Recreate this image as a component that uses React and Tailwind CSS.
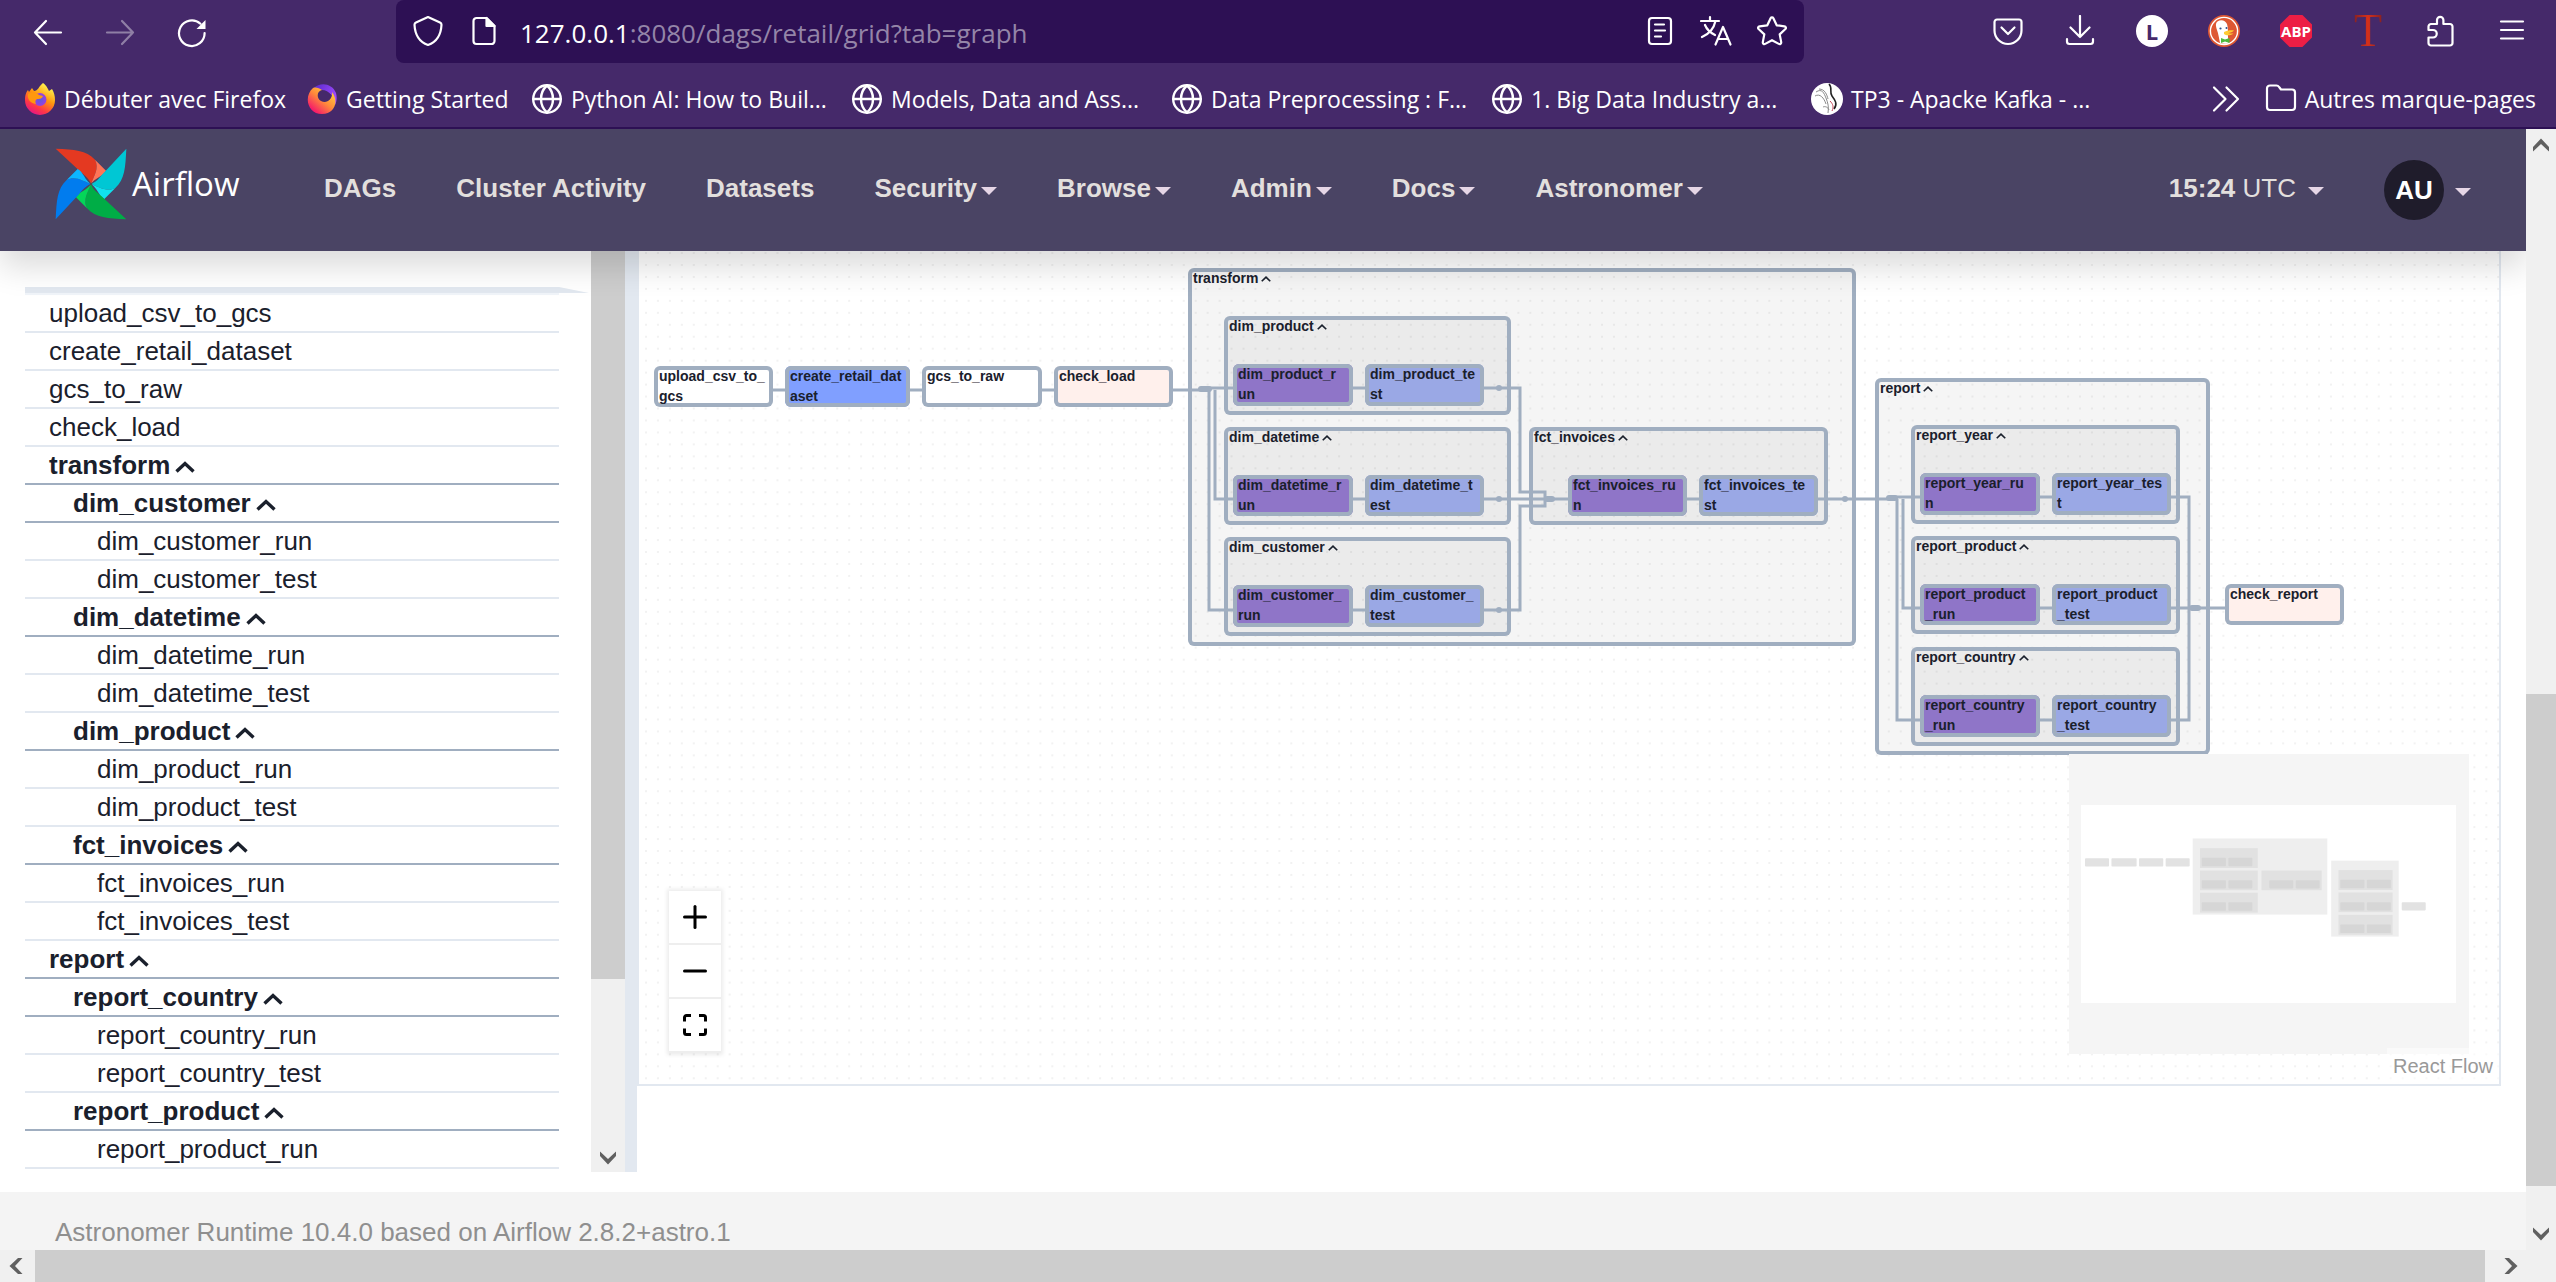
import React from "react";
import { Plus, Minus } from "lucide-react";

/* ---------- Browser chrome icons (32px grid) ---------- */

function Icon({ children, className = "" }) {
  return (
    <svg
      viewBox="0 0 32 32"
      className={"size-8 shrink-0 " + className}
      fill="none"
      stroke="currentColor"
      strokeWidth="2.2"
      strokeLinecap="round"
      strokeLinejoin="round"
      aria-hidden="true"
    >
      {children}
    </svg>
  );
}

const ArrowLeftIcon = () => (
  <Icon>
    <path d="M14 5 3 16.500 14 28M3 16.500H29" />
  </Icon>
);

const ArrowRightIcon = () => (
  <Icon className="opacity-40">
    <path d="M18 5 29 16.500 18 28M29 16.500H3" />
  </Icon>
);

const ReloadIcon = () => (
  <Icon>
    <path d="M28.600 17a12.800 12.800 0 1 1-4.200-9.300" />
    <path d="M29.500 4v9h-9z" fill="currentColor" stroke="none" />
  </Icon>
);

const ShieldIcon = () => (
  <Icon>
    <path d="M16 2 28 7.500c1 .5 1.500 1 1.500 2.200C29 20 24.500 27 16 30 7.500 27 3 20 2.500 9.700c0-1.200.5-1.700 1.500-2.200z" />
  </Icon>
);

const PageIcon = () => (
  <Icon>
    <path d="M18.500 3H8.500A3 3 0 0 0 5.500 6v20a3 3 0 0 0 3 3h15a3 3 0 0 0 3-3V11z" />
    <path d="M18.500 3v8h8z" fill="currentColor" />
  </Icon>
);

const ReaderIcon = () => (
  <Icon>
    <rect x="5" y="3" width="22" height="26" rx="3" />
    <path d="M11 9.500h9M11 15.500h10M11 21.500h6" />
  </Icon>
);

const TranslateIcon = () => (
  <Icon>
    <path d="M1 6h18M10 2v4M15.500 6C14 13 9 19 2 22M5 10c2 5 6 8 10 10" />
    <path d="M15.500 29.500 23 12l7.500 17.500M18 24h10" />
  </Icon>
);

const StarIcon = () => (
  <Icon>
    <path d="M14.600 3.200a1.600 1.600 0 0 1 2.800 0l3.300 7.100 7.700 1c1.500.2 2 1.700 1 2.700l-5.700 5.400 1.500 7.700c.2 1.500-1.100 2.500-2.400 1.800L16 25.200l-6.800 3.700c-1.300.7-2.600-.3-2.400-1.800l1.500-7.700L2.600 14c-1-1-.5-2.500 1-2.700l7.700-1z" />
  </Icon>
);

const PocketIcon = () => (
  <Icon>
    <path d="M5 4.500h22a2.500 2.500 0 0 1 2.500 2.500v8.500c0 7.500-6 13.500-13.500 13.500S2.500 23 2.500 15.500V7A2.500 2.500 0 0 1 5 4.500zM9.500 12.500l6.500 6.500 6.500-6.500" />
  </Icon>
);

const DownloadIcon = () => (
  <Icon>
    <path d="M16 1v21M6.500 12.500 16 22l9.500-9.500M3 24v2.500A2.500 2.500 0 0 0 5.500 29h21a2.500 2.500 0 0 0 2.500-2.500V24" />
  </Icon>
);

const DuckIcon = () => (
  <svg viewBox="0 0 32 32" className="size-8" aria-hidden="true">
    <circle cx="16" cy="16" r="16" fill="#de5833" />
    <circle cx="16" cy="16" r="13.600" fill="none" stroke="#fff" strokeWidth="1.400" />
    <path d="M9.500 6.500c3.500-2.500 8-1 9.500 2.500 1.500 4 .5 9 1 13l.5 6c-3 1.200-6 1-8.500 0C11 23 10.500 19 9 15c-1-3.500-2-6.500.5-8.500z" fill="#fff" />
    <circle cx="12.500" cy="13.500" r="1.100" fill="#2d4f8e" />
    <circle cx="18.500" cy="13" r="1" fill="#2d4f8e" />
    <path d="M16 17c3-1.500 7-2 10-1.500-1 1.500-4 2.300-6 2.500 2 .6 4 .5 5.500.5-2 2-7.500 2.500-9.500.5z" fill="#fc3" />
    <path d="M13 23l4 1.500 4.500-1.500v5L17 26.500 13 28z" fill="#4cba3c" />
  </svg>
);

const AdblockIcon = () => (
  <span className="grid size-8 place-items-center bg-[#ed1e45] text-[15px] font-bold leading-none text-white [clip-path:polygon(30%_0,70%_0,100%_30%,100%_70%,70%_100%,30%_100%,0_70%,0_30%)]">
    ABP
  </span>
);

const PuzzleIcon = () => (
  <Icon>
    <path d="M7 9h6V5a3.200 3.200 0 0 1 6.400 0v4H26a2.500 2.500 0 0 1 2.500 2.500V28a2.500 2.500 0 0 1-2.500 2.500H7A2.500 2.500 0 0 1 4.500 28v-5.500H9a3.700 3.700 0 0 0 0-7.500H4.500v-3.500A2.500 2.500 0 0 1 7 9z" />
  </Icon>
);

const MenuIcon = () => (
  <Icon>
    <path d="M5 6.500h22M5 15h22M5 23.500h22" />
  </Icon>
);

const GlobeIcon = () => (
  <Icon>
    <circle cx="16" cy="16" r="13.800" strokeWidth="2.400" />
    <path d="M2.500 16h27M16 2.500c-8 7-8 20 0 27M16 2.500c8 7 8 20 0 27" strokeWidth="2.400" />
  </Icon>
);

const FolderIcon = () => (
  <Icon>
    <path d="M2 5.500A3 3 0 0 1 5 2.500h6.500c1.500 0 2 .7 3 2l1.500 2h11a3 3 0 0 1 3 3V24a3 3 0 0 1-3 3H5a3 3 0 0 1-3-3z" />
  </Icon>
);

const OverflowIcon = () => (
  <Icon>
    <path d="M5 4.500 16.500 16 5 27.500M17.500 4.500 29 16 17.500 27.500" />
  </Icon>
);

const FirefoxIcon = () => (
  <svg viewBox="0 0 32 32" className="size-8 shrink-0" aria-hidden="true">
    <defs>
      <linearGradient id="ffBody" x1="0.8" y1="0.1" x2="0.3" y2="1">
        <stop offset="0" stopColor="#fff44f" />
        <stop offset="0.4" stopColor="#ff980e" />
        <stop offset="0.75" stopColor="#ff3647" />
        <stop offset="1" stopColor="#e31587" />
      </linearGradient>
      <radialGradient id="ffCore">
        <stop offset="0" stopColor="#5b5bdf" />
        <stop offset="1" stopColor="#9a3fe0" />
      </radialGradient>
    </defs>
    <path d="M19 0c4 3 5 6 6 8l3-2c2 3 3 7 3 11a15 15 0 0 1-30 0C1 11 3 8 4 7l1 2 3-4 2 3c4 0 5-5 9-8z" fill="url(#ffBody)" />
    <circle cx="16" cy="16.500" r="6.500" fill="url(#ffCore)" />
    <path d="M4 11c4-3 9-2 11 1l4 1c-1 3-4 3-6 3-2 1-2 3-1 5-6-1-9-5-8-10z" fill="#ff980e" />
  </svg>
);

const FirefoxBrandIcon = () => (
  <svg viewBox="0 0 32 32" className="size-8 shrink-0" aria-hidden="true">
    <defs>
      <linearGradient id="fbWarm" x1="0.9" y1="0.1" x2="0.2" y2="0.9">
        <stop offset="0" stopColor="#ffd43c" />
        <stop offset="0.5" stopColor="#ff8a3a" />
        <stop offset="1" stopColor="#f5156c" />
      </linearGradient>
      <linearGradient id="fbCool" x1="0" y1="0" x2="1" y2="0.6">
        <stop offset="0" stopColor="#592acb" />
        <stop offset="1" stopColor="#a14bff" />
      </linearGradient>
    </defs>
    <path d="M8 5C14-1 26 0 30 10c1 4 1 8-1 12 0-8-6-15-13-15z" fill="url(#fbCool)" />
    <path d="M7 5c3-1 6 0 9 2-5 1-6 8-1 11 6 3 12-2 11-9 7 9 3 22-10 22C2 31-3 14 7 5z" fill="url(#fbWarm)" />
  </svg>
);

const SketchIcon = () => (
  <svg viewBox="0 0 32 32" className="size-8 shrink-0" aria-hidden="true">
    <circle cx="16" cy="16" r="16" fill="#fff" />
    <g fill="none" stroke="#8b8b8b" strokeWidth="1">
      <path d="M5 9c6-4 8 1 10 6s3 9 2 15M8 6c6 0 8 6 9 10M4 13c5-3 9 2 11 8M12 24c2-1 5 0 6 3" />
    </g>
    <path d="M18 1c4 4 0 8 3 12s6 8 2 13" fill="none" stroke="#222" strokeWidth="1.600" />
    <path d="M19 18c3 3 4 6 2 10" fill="none" stroke="#c5485a" strokeWidth="1" />
  </svg>
);

/* ---------- Browser chrome ---------- */

const toolbarActions = [
  { label: "Pocket", icon: <PocketIcon /> },
  { label: "Downloads", icon: <DownloadIcon /> },
  {
    label: "Account",
    icon: (
      <span className="grid size-8 place-items-center rounded-full bg-white text-[22px] font-bold leading-none text-[#45296a]">
        L
      </span>
    ),
  },
  { label: "DuckDuckGo", icon: <DuckIcon /> },
  { label: "Adblock Plus", icon: <AdblockIcon /> },
  {
    label: "Translator",
    icon: (
      <span className="flex size-8 justify-center bg-linear-to-r from-[#7d1f22] via-[#d5301a] to-[#7d1f22] bg-clip-text font-['Liberation_Serif',serif] text-[46px] leading-8 text-transparent">
        T
      </span>
    ),
  },
  { label: "Extensions", icon: <PuzzleIcon /> },
  { label: "Menu", icon: <MenuIcon /> },
];

const bookmarks = [
  { label: "Débuter avec Firefox", icon: <FirefoxIcon />, width: "w-[282px]" },
  { label: "Getting Started", icon: <FirefoxBrandIcon />, width: "w-[225px]" },
  { label: "Python AI: How to Buil...", icon: <GlobeIcon />, width: "w-[320px]" },
  { label: "Models, Data and Ass...", icon: <GlobeIcon />, width: "w-[320px]" },
  { label: "Data Preprocessing : F...", icon: <GlobeIcon />, width: "w-[320px]" },
  { label: "1. Big Data Industry a...", icon: <GlobeIcon />, width: "w-[320px]" },
  { label: "TP3 - Apacke Kafka - ...", icon: <SketchIcon />, width: "w-[320px]" },
];

function BrowserChrome() {
  return (
    <header className="border-b-2 border-[#2d1054] bg-[#45296a] font-['Open_Sans',sans-serif] text-white">
      <div className="flex h-[63px] items-start">
        <div className="flex w-[396px] gap-10 pl-8 pt-4">
          <button type="button" aria-label="Back"><ArrowLeftIcon /></button>
          <button type="button" aria-label="Forward"><ArrowRightIcon /></button>
          <button type="button" aria-label="Reload"><ReloadIcon /></button>
        </div>
        <div className="flex h-full w-[1408px] items-start gap-5 rounded-lg bg-[#2d1054] px-4 pt-[15px]">
          <div className="flex gap-6">
            <button type="button" aria-label="Site protection"><ShieldIcon /></button>
            <button type="button" aria-label="Site information"><PageIcon /></button>
          </div>
          <div
            role="textbox"
            aria-label="Address"
            tabIndex={0}
            className="flex-1 whitespace-nowrap text-[26px] leading-9 text-white"
          >
            127.0.0.1<span className="text-[#9485a8]">:8080/dags/retail/grid?tab=graph</span>
          </div>
          <div className="flex gap-6">
            <button type="button" aria-label="Reader view"><ReaderIcon /></button>
            <button type="button" aria-label="Translate"><TranslateIcon /></button>
            <button type="button" aria-label="Bookmark page"><StarIcon /></button>
          </div>
        </div>
        <div className="flex flex-1 justify-end gap-10 pr-7 pt-[15px]">
          {toolbarActions.map((a) => (
            <button key={a.label} type="button" aria-label={a.label}>{a.icon}</button>
          ))}
        </div>
      </div>
      <nav aria-label="Bookmarks" className="flex h-16 items-center pb-1 pl-6 pr-5 pt-3 text-[23px]">
        {bookmarks.map((b) => (
          <a key={b.label} href="#" className={"flex shrink-0 items-center gap-2 whitespace-nowrap " + b.width}>
            {b.icon}
            {b.label}
          </a>
        ))}
        <button type="button" aria-label="More bookmarks" className="ml-auto"><OverflowIcon /></button>
        <a href="#" className="ml-6 flex items-center gap-2 whitespace-nowrap">
          <FolderIcon />
          Autres marque-pages
        </a>
      </nav>
    </header>
  );
}

/* ---------- Airflow navigation ---------- */

const bladeColors = [
  ["#e43921", "#ff7557"],
  ["#00c7d4", "#11e1ee"],
  ["#00ad46", "#04d659"],
  ["#017cee", "#0cb6ff"],
];

function Pinwheel() {
  return (
    <svg viewBox="-108 -108 216 216" className="size-[72px]" aria-hidden="true">
      {bladeColors.map(([main, light], i) => (
        <g key={main} transform={`rotate(${i * 90})`}>
          <path d="M-106-106C-50-103-15-102 12-73C26-48 8-22 0 0C-8-22-24-28-38-43Z" fill={main} />
          <path d="M12-73L45-40C38-24 10-18 0 0C8-22 26-48 12-73Z" fill={light} />
        </g>
      ))}
      <circle r="4" fill="#51504f" />
    </svg>
  );
}

const Caret = () => (
  <svg viewBox="0 0 16 8" className="mt-1 h-2 w-4" aria-hidden="true">
    <path d="M0 0h16L8 8z" fill="#e6d6e6" />
  </svg>
);

const navItems = [
  { label: "DAGs" },
  { label: "Cluster Activity" },
  { label: "Datasets" },
  { label: "Security", menu: true },
  { label: "Browse", menu: true },
  { label: "Admin", menu: true },
  { label: "Docs", menu: true },
  { label: "Astronomer", menu: true },
];

function Navbar() {
  return (
    <nav
      aria-label="Main"
      className="relative z-10 flex h-[122px] items-center bg-[#4a4464] px-[55px] text-[26px] text-[#e2dfdd] shadow-[0_16px_30px_0_rgba(0,0,0,0.14)]"
    >
      <a href="#" className="flex w-[269px] items-center gap-[5px] pb-3 text-white">
        <Pinwheel />
        <span className="font-['Open_Sans',sans-serif] text-[33px]">Airflow</span>
      </a>
      <div className="flex items-center gap-[60px] pb-[3px] font-bold">
        {navItems.map((n) =>
          n.menu ? (
            <button key={n.label} type="button" className="flex items-center gap-1">
              {n.label}
              <Caret />
            </button>
          ) : (
            <a key={n.label} href="#">{n.label}</a>
          )
        )}
      </div>
      <button type="button" className="ml-auto flex items-center gap-3 pb-[3px]">
        <span><b>15:24</b> UTC</span>
        <Caret />
      </button>
      <button type="button" className="ml-[60px] flex items-center gap-[11px]">
        <span className="grid size-[60px] place-items-center rounded-full bg-[#1f1c2b] font-bold text-white">AU</span>
        <Caret />
      </button>
    </nav>
  );
}

/* ---------- Task list ---------- */

const tasks = [
  [0, "upload_csv_to_gcs"],
  [0, "create_retail_dataset"],
  [0, "gcs_to_raw"],
  [0, "check_load"],
  [0, "transform", true],
  [1, "dim_customer", true],
  [2, "dim_customer_run"],
  [2, "dim_customer_test"],
  [1, "dim_datetime", true],
  [2, "dim_datetime_run"],
  [2, "dim_datetime_test"],
  [1, "dim_product", true],
  [2, "dim_product_run"],
  [2, "dim_product_test"],
  [1, "fct_invoices", true],
  [2, "fct_invoices_run"],
  [2, "fct_invoices_test"],
  [0, "report", true],
  [1, "report_country", true],
  [2, "report_country_run"],
  [2, "report_country_test"],
  [1, "report_product", true],
  [2, "report_product_run"],
];

const indent = ["pl-6", "pl-12", "pl-[72px]"];

const Chevron = ({ className }) => (
  <svg viewBox="0 0 20 12" className={className} fill="none" stroke="currentColor" strokeWidth="3.400" aria-hidden="true">
    <path d="M1.500 10.500 10 2.500l8.500 8" />
  </svg>
);

function TaskList() {
  return (
    <aside className="flex w-[637px] shrink-0">
      <div className="flex-1 pb-[3px] pl-[25px] pt-9">
        <div className="flex h-2">
          <div className="w-[534px] border-b-2 border-[#f0f4f9] bg-[#e2e8f0]" />
          <svg viewBox="0 0 32 6" className="h-[6px] w-8" aria-hidden="true">
            <path d="M0 0 30 6H0z" fill="#e2e8f0" />
          </svg>
        </div>
        <ul className="w-[534px] text-[26px] leading-9 text-[#1a202c]">
          {tasks.map(([level, name, group]) => (
            <li
              key={name}
              className={
                "h-[38px] border-b-2 " + indent[level] + (group ? " border-[#a0aec0] font-bold" : " border-[#e2e8f0]")
              }
            >
              {group ? (
                <button type="button" aria-expanded="true" className="flex items-center gap-[5px]">
                  {name}
                  <Chevron className="mt-1 h-3 w-5" />
                </button>
              ) : (
                <a href="#">{name}</a>
              )}
            </li>
          ))}
        </ul>
      </div>
      <div className="flex w-[34px] flex-col justify-between bg-[#f0f0f0]">
        <div className="h-[728px] bg-[#cdcdcd]" />
        <ScrollArrow className="mx-auto mb-1 rotate-180" />
      </div>
      <div className="w-3 bg-[#e2e8f0]" />
    </aside>
  );
}

function ScrollArrow({ className = "" }) {
  return (
    <svg viewBox="0 0 20 20" className={"size-5 " + className} aria-hidden="true">
      <path d="M2 12 10 3.500l8 8.500v4.500L10 9l-8 7.500z" fill="#606060" />
    </svg>
  );
}

/* ---------- Graph ---------- */

const groups = [
  { name: "transform", x: 549, y: 17, w: 668, h: 378 },
  { name: "dim_product", x: 585, y: 65, w: 287, h: 99 },
  { name: "dim_datetime", x: 585, y: 176, w: 287, h: 98 },
  { name: "dim_customer", x: 585, y: 286, w: 287, h: 99 },
  { name: "fct_invoices", x: 890, y: 176, w: 299, h: 98 },
  { name: "report", x: 1236, y: 127, w: 335, h: 377 },
  { name: "report_year", x: 1272, y: 174, w: 269, h: 99 },
  { name: "report_product", x: 1272, y: 285, w: 269, h: 98 },
  { name: "report_country", x: 1272, y: 396, w: 269, h: 99 },
];

const fills = {
  plain: "bg-white",
  dataset: "bg-[#809fff]",
  check: "bg-[#fff0ec]",
  run: "bg-[#8f75c8]",
  test: "bg-[#9aa8e5]",
};

const nodes = [
  { lines: ["upload_csv_to_", "gcs"], kind: "plain", x: 15, y: 115, w: 119, h: 41 },
  { lines: ["create_retail_dat", "aset"], kind: "dataset", x: 146, y: 115, w: 125, h: 41 },
  { lines: ["gcs_to_raw"], kind: "plain", x: 283, y: 115, w: 120, h: 41 },
  { lines: ["check_load"], kind: "check", x: 415, y: 115, w: 119, h: 41 },
  { lines: ["dim_product_r", "un"], kind: "run", x: 594, y: 113, w: 120, h: 42 },
  { lines: ["dim_product_te", "st"], kind: "test", x: 726, y: 113, w: 119, h: 42 },
  { lines: ["dim_datetime_r", "un"], kind: "run", x: 594, y: 224, w: 120, h: 41 },
  { lines: ["dim_datetime_t", "est"], kind: "test", x: 726, y: 224, w: 119, h: 41 },
  { lines: ["dim_customer_", "run"], kind: "run", x: 594, y: 334, w: 120, h: 42 },
  { lines: ["dim_customer_", "test"], kind: "test", x: 726, y: 334, w: 119, h: 42 },
  { lines: ["fct_invoices_ru", "n"], kind: "run", x: 929, y: 224, w: 119, h: 41 },
  { lines: ["fct_invoices_te", "st"], kind: "test", x: 1060, y: 224, w: 119, h: 41 },
  { lines: ["report_year_ru", "n"], kind: "run", x: 1281, y: 222, w: 120, h: 42 },
  { lines: ["report_year_tes", "t"], kind: "test", x: 1413, y: 222, w: 119, h: 42 },
  { lines: ["report_product", "_run"], kind: "run", x: 1281, y: 333, w: 120, h: 41 },
  { lines: ["report_product", "_test"], kind: "test", x: 1413, y: 333, w: 119, h: 41 },
  { lines: ["report_country", "_run"], kind: "run", x: 1281, y: 444, w: 120, h: 42 },
  { lines: ["report_country", "_test"], kind: "test", x: 1413, y: 444, w: 119, h: 42 },
  { lines: ["check_report"], kind: "check", x: 1586, y: 333, w: 119, h: 41 },
];

const edges = [
  "M134 139H146M271 139H283M403 139H415M534 139H562",
  "M562 137H594M576 139V248H594M570 139V359H594",
  "M714 137H726M714 248H726M714 359H726",
  "M845 137H881V241H906V248M845 248H929M845 359H881V255H906V248",
  "M1048 248H1060M1179 248H1250",
  "M1250 246H1281M1264 248V357H1281M1258 248V469H1281",
  "M1401 246H1413M1401 357H1413M1401 469H1413",
  "M1532 246H1550V469H1532M1532 357H1586",
];

const joints = [
  { x: 559, y: 136, w: 14 },
  { x: 857, y: 135, w: 6 },
  { x: 857, y: 246, w: 6 },
  { x: 857, y: 357, w: 6 },
  { x: 905, y: 246, w: 11 },
  { x: 1203, y: 246, w: 6 },
  { x: 1247, y: 245, w: 12 },
  { x: 1550, y: 355, w: 12 },
];

const box = (n) => ({ left: n.x, top: n.y, width: n.w, height: n.h });

function MiniMap() {
  return (
    <svg viewBox="0 0 400 300" className="absolute bottom-[30px] right-[30px] w-[400px]" aria-label="Mini map">
      <rect width="400" height="300" fill="#f5f5f5" />
      <rect x="12" y="51" width="375" height="198" fill="#fff" />
      <g transform="translate(13 81) scale(0.2016)">
        {groups.map((g) => (
          <rect key={g.name} x={g.x} y={g.y} width={g.w} height={g.h} fill="#000" fillOpacity={g.w > 320 ? 0.065 : 0.05} />
        ))}
        {nodes.map((n) => (
          <rect
            key={n.lines.join("")}
            x={n.x}
            y={n.y}
            width={n.w}
            height={n.h}
            rx="4"
            fill={n.lines.length > 1 && n.x > 500 ? "#d6d6d6" : "#e2e2e2"}
          />
        ))}
      </g>
    </svg>
  );
}

function Graph() {
  return (
    <section aria-label="Graph" className="relative mr-[25px] h-[835px] overflow-hidden border-x-2 border-b-2 border-[#e2e8f0]">
      <svg className="absolute inset-0 size-full" aria-hidden="true">
        <defs>
          <pattern id="dots" x="6" y="13" width="11.950" height="11.960" patternUnits="userSpaceOnUse">
            <circle cx="1" cy="1" r="0.700" fill="#dadada" />
          </pattern>
        </defs>
        <rect width="100%" height="100%" fill="url(#dots)" />
      </svg>
      <div className="absolute left-0 top-0 text-[14px] font-bold leading-5 text-[#1a202c]">
        {groups.map((g) => (
          <button
            key={g.name}
            type="button"
            aria-expanded="true"
            className="absolute flex items-start gap-[3px] rounded-md bg-black/4 px-[5px] text-left shadow-[inset_0_0_0_4px_#a0aec0]"
            style={box(g)}
          >
            {g.name}
            <Chevron className="mt-2 h-[6px] w-[10px]" />
          </button>
        ))}
        <svg className="pointer-events-none absolute left-0 top-0 h-[640px] w-[1860px]" aria-hidden="true">
          {edges.map((d) => (
            <path key={d} d={d} fill="none" stroke="#a0aec0" strokeWidth="3" />
          ))}
          {joints.map((j) => (
            <rect key={j.x + "-" + j.y} x={j.x} y={j.y - 1} width={j.w} height="6" rx="3" fill="#a0aec0" />
          ))}
        </svg>
        {nodes.map((n) => (
          <button
            key={n.lines.join("")}
            type="button"
            className={
              "absolute flex flex-col whitespace-nowrap rounded-md px-[5px] text-left shadow-[inset_0_0_0_4px_#a0aec0] " +
              fills[n.kind]
            }
            style={box(n)}
          >
            {n.lines.map((l) => (
              <span key={l}>{l}</span>
            ))}
          </button>
        ))}
      </div>
      <div className="absolute bottom-[31px] left-[30px] flex flex-col gap-[2px] bg-[#eeeeee] pb-[2px] text-black shadow-[0_0_4px_2px_rgba(0,0,0,0.08)]">
        <button type="button" aria-label="Zoom in" className="grid size-[52px] place-items-center bg-white">
          <Plus className="size-9" strokeWidth={2} />
        </button>
        <button type="button" aria-label="Zoom out" className="grid size-[52px] place-items-center bg-white">
          <Minus className="size-9" strokeWidth={2} />
        </button>
        <button type="button" aria-label="Fit view" className="grid size-[52px] place-items-center bg-white">
          <svg viewBox="0 0 24 24" className="size-6" fill="none" stroke="currentColor" strokeWidth="3" aria-hidden="true">
            <path d="M1.500 8.500V4.500a2 2 0 0 1 2-2H8M16 2.500h4.500a2 2 0 0 1 2 2v4M22.500 15.500v4a2 2 0 0 1-2 2H16M8 21.500H3.500a2 2 0 0 1-2-2v-4" />
          </svg>
        </button>
      </div>
      <MiniMap />
      <a href="#" className="absolute bottom-0 right-0 bg-white/50 px-[6px] py-1 text-[20px] leading-7 text-[#999999]">
        React Flow
      </a>
    </section>
  );
}

/* ---------- Page ---------- */

export default function App() {
  return (
    <div className="flex min-h-screen flex-col bg-white font-['Liberation_Sans',Arial,sans-serif]">
      <BrowserChrome />
      <div className="flex flex-1">
        <div className="flex min-w-0 flex-1 flex-col overflow-hidden">
          <Navbar />
          <main className="flex pb-5">
            <TaskList />
            <div className="min-w-0 flex-1">
              <Graph />
            </div>
          </main>
          <footer className="flex-1 bg-[#f4f4f4] px-[55px] pt-[22px] text-[26px] leading-9 text-[#8f8f8f]">
            Astronomer Runtime 10.4.0 based on Airflow 2.8.2+astro.1
          </footer>
        </div>
        <div className="flex w-[30px] shrink-0 flex-col items-center bg-[#f0f0f0] py-[6px]">
          <ScrollArrow />
          <div className="mt-[539px] h-[492px] w-full bg-[#cdcdcd]" />
          <ScrollArrow className="mt-auto rotate-180" />
        </div>
      </div>
      <div className="flex h-8 items-center bg-[#f0f0f0]">
        <div className="w-[35px] pl-[6px]">
          <ScrollArrow className="-rotate-90" />
        </div>
        <div className="h-full flex-1 bg-[#cdcdcd]" />
        <div className="w-[71px] pl-4">
          <ScrollArrow className="rotate-90" />
        </div>
      </div>
    </div>
  );
}
